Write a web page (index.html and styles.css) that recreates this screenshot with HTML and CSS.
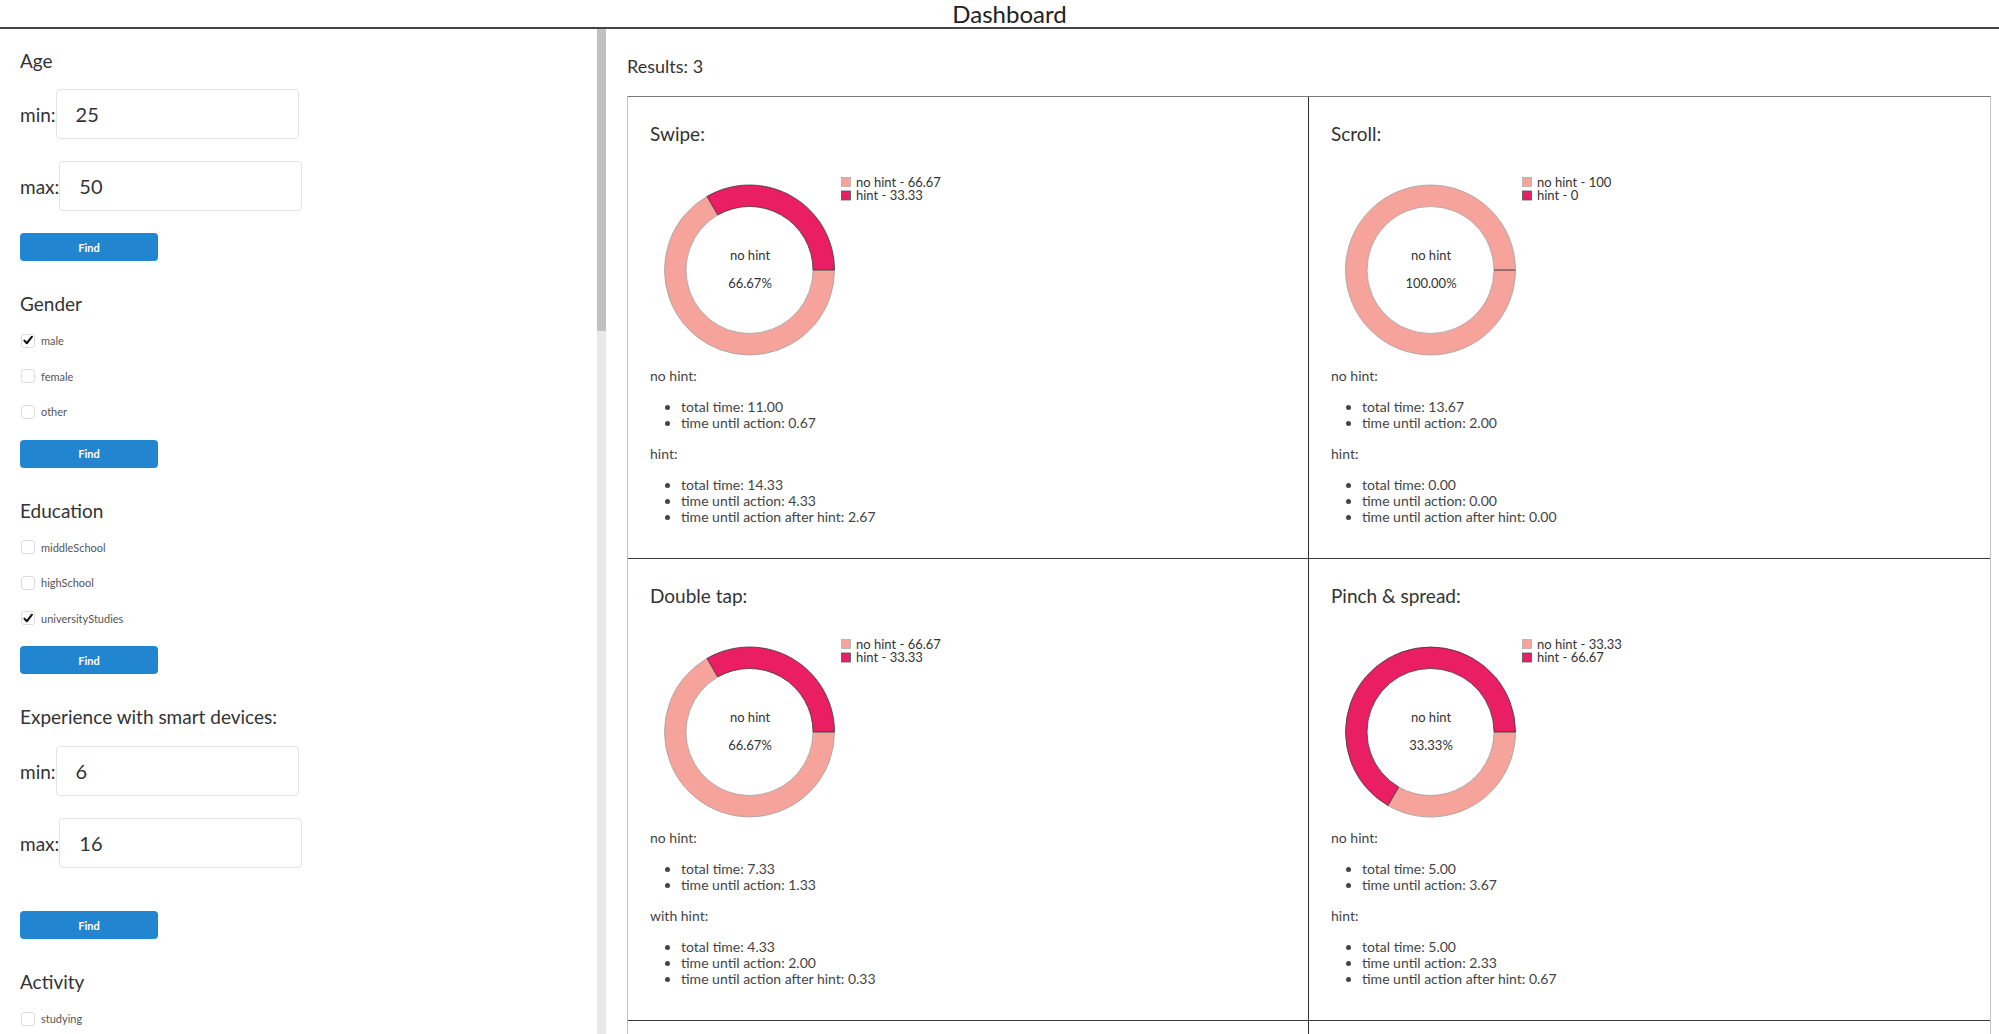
FILE: index.html
```html
<!DOCTYPE html>
<html lang="en">
<head>
<meta charset="utf-8">
<title>Dashboard</title>
<link rel="stylesheet" href="styles.css">
</head>
<body>
<header class="topbar">Dashboard</header>
<div class="layout">
  <aside class="sidebar">
    <section class="filter">
      <h3 class="filter-title">Age</h3>
      <div class="range-row first"><label class="range-label">min:</label><input class="num" type="text" value="25"></div>
      <div class="range-row"><label class="range-label">max:</label><input class="num" type="text" value="50"></div>
      <button class="find">Find</button>
    </section>

    <section class="filter">
      <h3 class="filter-title">Gender</h3>
      <ul class="options">
        <li><span class="box"><svg viewBox="0 0 14 14"><path d="M2.8 7.2 L5.6 10.2 L11.6 2.6"/></svg></span>male</li>
        <li><span class="box"></span>female</li>
        <li><span class="box"></span>other</li>
      </ul>
      <button class="find">Find</button>
    </section>

    <section class="filter">
      <h3 class="filter-title">Education</h3>
      <ul class="options">
        <li><span class="box"></span>middleSchool</li>
        <li><span class="box"></span>highSchool</li>
        <li><span class="box"><svg viewBox="0 0 14 14"><path d="M2.8 7.2 L5.6 10.2 L11.6 2.6"/></svg></span>universityStudies</li>
      </ul>
      <button class="find">Find</button>
    </section>

    <section class="filter">
      <h3 class="filter-title">Experience with smart devices:</h3>
      <div class="range-row first-exp"><label class="range-label">min:</label><input class="num" type="text" value="6"></div>
      <div class="range-row"><label class="range-label">max:</label><input class="num" type="text" value="16"></div>
      <button class="find find-spaced">Find</button>
    </section>

    <section class="filter">
      <h3 class="filter-title">Activity</h3>
      <ul class="options">
        <li><span class="box"></span>studying</li>
      </ul>
    </section>
  </aside>

  <div class="scrollbar"><div class="thumb"></div></div>

  <main class="content">
    <p class="results">Results: 3</p>
    <div class="grid">

      <article class="card">
        <h2 class="card-title">Swipe:</h2>
        <svg class="donut" width="340" height="190" viewBox="0 0 340 190">
          <path class="seg-nohint" d="M57 28.39 A85 85 0 1 0 184.5 102 L163 102 A63.5 63.5 0 1 1 67.75 47.01 Z"/>
          <path class="seg-hint" d="M184.5 102 A85 85 0 0 0 57 28.39 L67.75 47.01 A63.5 63.5 0 0 1 163 102 Z"/>
          <text class="center-label" x="100" y="92">no hint</text>
          <text class="center-label" x="100" y="120">66.67%</text>
          <rect class="key-nohint" x="191.5" y="9.5" width="9" height="9"/>
          <text class="legend" x="206" y="18.5">no hint - 66.67</text>
          <rect class="key-hint" x="191.5" y="23" width="9" height="9"/>
          <text class="legend" x="206" y="32">hint - 33.33</text>
        </svg>
        <p class="group">no hint:</p>
        <ul class="stats">
          <li>total time: 11.00</li>
          <li>time until action: 0.67</li>
        </ul>
        <p class="group">hint:</p>
        <ul class="stats">
          <li>total time: 14.33</li>
          <li>time until action: 4.33</li>
          <li>time until action after hint: 2.67</li>
        </ul>
      </article>

      <article class="card">
        <h2 class="card-title">Scroll:</h2>
        <svg class="donut" width="340" height="190" viewBox="0 0 340 190">
          <path class="seg-nohint" fill-rule="evenodd" d="M184.5 102 A85 85 0 1 0 14.5 102 A85 85 0 1 0 184.5 102 Z M163 102 A63.5 63.5 0 1 1 36 102 A63.5 63.5 0 1 1 163 102 Z"/>
          <line class="zero-line" x1="163" y1="102" x2="184.5" y2="102"/>
          <text class="center-label" x="100" y="92">no hint</text>
          <text class="center-label" x="100" y="120">100.00%</text>
          <rect class="key-nohint" x="191.5" y="9.5" width="9" height="9"/>
          <text class="legend" x="206" y="18.5">no hint - 100</text>
          <rect class="key-hint" x="191.5" y="23" width="9" height="9"/>
          <text class="legend" x="206" y="32">hint - 0</text>
        </svg>
        <p class="group">no hint:</p>
        <ul class="stats">
          <li>total time: 13.67</li>
          <li>time until action: 2.00</li>
        </ul>
        <p class="group">hint:</p>
        <ul class="stats">
          <li>total time: 0.00</li>
          <li>time until action: 0.00</li>
          <li>time until action after hint: 0.00</li>
        </ul>
      </article>

      <article class="card">
        <h2 class="card-title">Double tap:</h2>
        <svg class="donut" width="340" height="190" viewBox="0 0 340 190">
          <path class="seg-nohint" d="M57 28.39 A85 85 0 1 0 184.5 102 L163 102 A63.5 63.5 0 1 1 67.75 47.01 Z"/>
          <path class="seg-hint" d="M184.5 102 A85 85 0 0 0 57 28.39 L67.75 47.01 A63.5 63.5 0 0 1 163 102 Z"/>
          <text class="center-label" x="100" y="92">no hint</text>
          <text class="center-label" x="100" y="120">66.67%</text>
          <rect class="key-nohint" x="191.5" y="9.5" width="9" height="9"/>
          <text class="legend" x="206" y="18.5">no hint - 66.67</text>
          <rect class="key-hint" x="191.5" y="23" width="9" height="9"/>
          <text class="legend" x="206" y="32">hint - 33.33</text>
        </svg>
        <p class="group">no hint:</p>
        <ul class="stats">
          <li>total time: 7.33</li>
          <li>time until action: 1.33</li>
        </ul>
        <p class="group">with hint:</p>
        <ul class="stats">
          <li>total time: 4.33</li>
          <li>time until action: 2.00</li>
          <li>time until action after hint: 0.33</li>
        </ul>
      </article>

      <article class="card">
        <h2 class="card-title">Pinch &amp; spread:</h2>
        <svg class="donut" width="340" height="190" viewBox="0 0 340 190">
          <path class="seg-nohint" d="M57 175.61 A85 85 0 0 0 184.5 102 L163 102 A63.5 63.5 0 0 1 67.75 156.99 Z"/>
          <path class="seg-hint" d="M184.5 102 A85 85 0 1 0 57 175.61 L67.75 156.99 A63.5 63.5 0 1 1 163 102 Z"/>
          <text class="center-label" x="100" y="92">no hint</text>
          <text class="center-label" x="100" y="120">33.33%</text>
          <rect class="key-nohint" x="191.5" y="9.5" width="9" height="9"/>
          <text class="legend" x="206" y="18.5">no hint - 33.33</text>
          <rect class="key-hint" x="191.5" y="23" width="9" height="9"/>
          <text class="legend" x="206" y="32">hint - 66.67</text>
        </svg>
        <p class="group">no hint:</p>
        <ul class="stats">
          <li>total time: 5.00</li>
          <li>time until action: 3.67</li>
        </ul>
        <p class="group">hint:</p>
        <ul class="stats">
          <li>total time: 5.00</li>
          <li>time until action: 2.33</li>
          <li>time until action after hint: 0.67</li>
        </ul>
      </article>

      <article class="card card-empty"></article>
      <article class="card card-empty"></article>
    </div>
  </main>
</div>
</body>
</html>
```

FILE: styles.css
```css
html, body {
  margin: 0;
  padding: 0;
  height: 100%;
  overflow: hidden;
  background: #fff;
}

body {
  font-family: "Segoe UI", Lato, "Open Sans", sans-serif;
  color: #333;
}

.topbar {
  height: 27px;
  line-height: 27px;
  font-size: 24px;
  text-align: center;
  padding-left: 20px;
  color: #222;
  border-bottom: 2px solid #444;
}

.layout {
  display: flex;
  height: calc(100vh - 29px);
  overflow: hidden;
}

/* ---------- sidebar ---------- */
.sidebar {
  width: 597px;
  flex: none;
  box-sizing: border-box;
  padding: 18px 0 0 20px;
  overflow: hidden;
}

.filter {
  margin-bottom: 29px;
}

.filter-title {
  margin: 0;
  font-size: 19px;
  font-weight: 400;
  line-height: 28px;
  color: #333;
}

.range-row {
  display: flex;
  align-items: center;
  margin-top: 22px;
}

.range-row.first { margin-top: 14px; }
.range-row.first-exp { margin-top: 15px; }

.range-label {
  font-size: 19px;
  color: #333;
}

.num {
  width: 243px;
  height: 50px;
  box-sizing: border-box;
  border: 1px solid #e3e3e3;
  border-radius: 4px;
  padding: 0 19px;
  font-family: inherit;
  font-size: 20px;
  color: #333;
  outline: none;
  background: #fff;
}

.find {
  display: block;
  width: 138px;
  height: 28px;
  margin-top: 22px;
  border: none;
  border-radius: 4px;
  background: #2185d0;
  color: #fff;
  font-family: inherit;
  font-size: 11px;
  font-weight: 700;
  cursor: pointer;
}

.find-spaced { margin-top: 43px; }

.options {
  list-style: none;
  margin: 5px 0 0;
  padding: 0;
}

.options + .find { margin-top: 10px; }

.options li {
  display: flex;
  align-items: center;
  height: 35.5px;
  font-size: 11px;
  color: #555;
}

.box {
  width: 14px;
  height: 14px;
  box-sizing: border-box;
  border: 1px solid #dcdcdc;
  border-radius: 3px;
  margin: 0 6px 0 1px;
  display: flex;
  align-items: center;
  justify-content: center;
}

.box svg {
  width: 13px;
  height: 13px;
  fill: none;
  stroke: #111;
  stroke-width: 2.4;
  stroke-linecap: round;
  stroke-linejoin: round;
}

/* ---------- fake scrollbar ---------- */
.scrollbar {
  width: 9px;
  flex: none;
  background: #e9e9e9;
}

.thumb {
  height: 302px;
  background: #c1c1c1;
}

/* ---------- main ---------- */
.content {
  flex: 1;
  min-width: 0;
  box-sizing: border-box;
  padding: 0 8px 0 21px;
  overflow: hidden;
}

.results {
  margin: 0;
  padding-top: 25px;
  font-size: 18px;
  line-height: 24px;
  color: #333;
}

.grid {
  margin-top: 18px;
  display: grid;
  grid-template-columns: 1fr 1fr;
  border-top: 1px solid #7a7a7a;
  border-left: 1px solid #c4c4c4;
  border-right: 1px solid #c4c4c4;
}

.card {
  padding: 23px 22px 18px;
  border-bottom: 1px solid #3a3a3a;
}

.card-empty {
  height: 420px;
}

.card:nth-child(odd) {
  border-right: 1px solid #2e2e2e;
}

.card-title {
  margin: 0 0 20px;
  font-size: 19px;
  font-weight: 400;
  line-height: 28px;
  color: #333;
}

.donut {
  display: block;
  font-family: "Segoe UI", Lato, "Open Sans", sans-serif;
}

.seg-nohint {
  fill: #f5a39b;
  stroke: #a0a0a0;
  stroke-width: 0.8;
}

.seg-hint {
  fill: #e91e63;
  stroke: #3a3a3a;
  stroke-width: 0.8;
}

.zero-line {
  stroke: #3a3a3a;
  stroke-width: 1;
}

.key-nohint {
  fill: #f5a39b;
  stroke: #b0b0b0;
  stroke-width: 0.8;
}

.key-hint {
  fill: #e91e63;
  stroke: #555;
  stroke-width: 0.8;
}

.center-label {
  font-size: 13px;
  fill: #333;
  text-anchor: middle;
}

.legend {
  font-size: 13px;
  fill: #333;
}

.group {
  margin: 10px 0 0;
  font-size: 14px;
  line-height: 16px;
  color: #444;
}

.stats + .group { margin-top: 15px; }

.stats {
  margin: 15px 0;
  padding-left: 31px;
  font-size: 14px;
  line-height: 16px;
  color: #444;
}
```
